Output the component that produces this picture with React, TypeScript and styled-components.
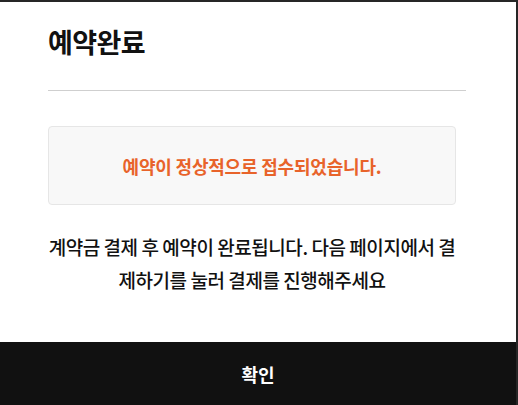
import { createGlobalStyle } from "styled-components";
import styled from "styled-components";

const GlobalStyle = createGlobalStyle`
  html, body {
    margin: 0;
    padding: 0;
    background: #262626;
  }
  body {
    font-family: "Noto Sans CJK KR", "Noto Sans", sans-serif;
    overflow: hidden;
  }
`;

const Modal = styled.div`
  width: 516px;
  margin-top: 2px;
  background: #fff;
  display: flex;
  flex-direction: column;
`;

const Header = styled.div`
  padding: 20px 50px 0 48px;
`;

const Title = styled.h2`
  margin: 0;
  font-size: 27px;
  line-height: 40px;
  font-weight: 700;
  color: #111;
  letter-spacing: -0.6px;
`;

const Divider = styled.hr`
  margin: 28px 0 0;
  border: none;
  border-top: 1px solid #cfcfcf;
`;

const Body = styled.div`
  padding: 35px 60px 0 48px;
  display: flex;
  flex-direction: column;
  align-items: stretch;
`;

const NoticeBox = styled.div`
  height: 77px;
  display: flex;
  align-items: center;
  justify-content: center;
  background: #f8f8f8;
  border: 1px solid #e6e6e6;
  border-radius: 4px;
`;

const NoticeText = styled.p`
  margin: 0;
  font-size: 18px;
  font-weight: 700;
  color: #e8632a;
  letter-spacing: -0.2px;
`;

const Message = styled.p`
  margin: 25px -4px 0;
  text-align: center;
  font-size: 19px;
  line-height: 33px;
  font-weight: 500;
  color: #111;
  letter-spacing: -0.45px;
`;

const Footer = styled.button`
  margin-top: 46px;
  height: 63px;
  width: 100%;
  border: none;
  background: #111;
  color: #fff;
  font-family: inherit;
  font-size: 18px;
  font-weight: 700;
  cursor: pointer;
`;

export default function App() {
  return (
    <>
      <GlobalStyle />
      <Modal>
        <Header>
          <Title>예약완료</Title>
          <Divider />
        </Header>
        <Body>
          <NoticeBox>
            <NoticeText>예약이 정상적으로 접수되었습니다.</NoticeText>
          </NoticeBox>
          <Message>
            계약금 결제 후 예약이 완료됩니다. 다음 페이지에서 결제하기를 눌러
            결제를 진행해주세요
          </Message>
        </Body>
        <Footer>확인</Footer>
      </Modal>
    </>
  );
}
